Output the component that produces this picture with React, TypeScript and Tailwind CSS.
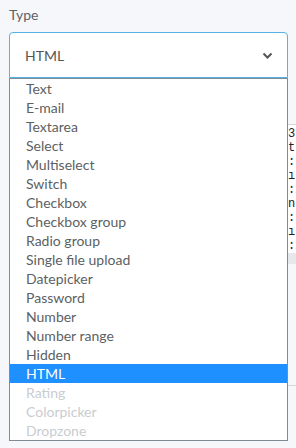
import React from "react";

const items = [
  "Text",
  "E-mail",
  "Textarea",
  "Select",
  "Multiselect",
  "Switch",
  "Checkbox",
  "Checkbox group",
  "Radio group",
  "Single file upload",
  "Datepicker",
  "Password",
  "Number",
  "Number range",
  "Hidden",
  "HTML",
  "Rating",
  "Colorpicker",
  "Dropzone",
];
const disabled = new Set(["Rating", "Colorpicker", "Dropzone"]);

const codeLines = ["3", "t", ":", "ı", ":i", "n", ":", "ı", ":i"];

export default function App() {
  return (
    <div
      className="relative w-[296px] h-[448px] overflow-hidden bg-[#f5f7fa] text-[#555]"
      style={{ fontFamily: "Lato, 'Open Sans', sans-serif" }}
    >
      <div className="pl-[9px] pt-[6px]">
        <div className="text-[14px] leading-[18px] text-[#5f6368]">Type</div>
        <div className="mt-[8px] w-[279px] h-[46px] rounded-t-[4px] border border-[#55b2e4] bg-white flex items-center justify-between pl-[15px] pr-[14px]">
          <span className="text-[14px] text-[#555]">HTML</span>
          <svg width="11" height="8" viewBox="0 0 11 8" className="mt-[2px]">
            <path d="M1.5 1.5 L5.5 5.5 L9.5 1.5" fill="none" stroke="#555" strokeWidth="2" />
          </svg>
        </div>
        {/* underlying code field partially hidden behind the menu */}
        <div className="mt-[46px] ml-[278px] w-[40px] border-t border-[#d4d7dc] bg-white">
          <div
            className="pt-[2px] text-[12px] leading-[14px] text-[#222]"
            style={{ fontFamily: "'Liberation Mono', monospace" }}
          >
            {codeLines.map((l, i) => (
              <div key={i} className="pl-[1px] whitespace-pre">{l}</div>
            ))}
          </div>
          <div className="h-[11px] bg-[#e6e8eb]" />
        </div>
        <div className="mt-[121px] ml-[278px] w-[40px] border-t border-[#d4d7dc]" />
      </div>

      {/* open dropdown menu */}
      <div className="absolute left-[9px] top-[78px] w-[279px] border border-[#7f8b97] bg-white">
        {items.map((it) => {
          const sel = it === "HTML";
          const dis = disabled.has(it);
          return (
            <div
              key={it}
              className={
                "h-[19px] pl-[16px] text-[14px] leading-[19px] " +
                (sel ? "bg-[#1e90ff] text-white" : dis ? "text-[#c9ccd1]" : "text-[#5c5f63]")
              }
            >
              {it}
            </div>
          );
        })}
      </div>
    </div>
  );
}
